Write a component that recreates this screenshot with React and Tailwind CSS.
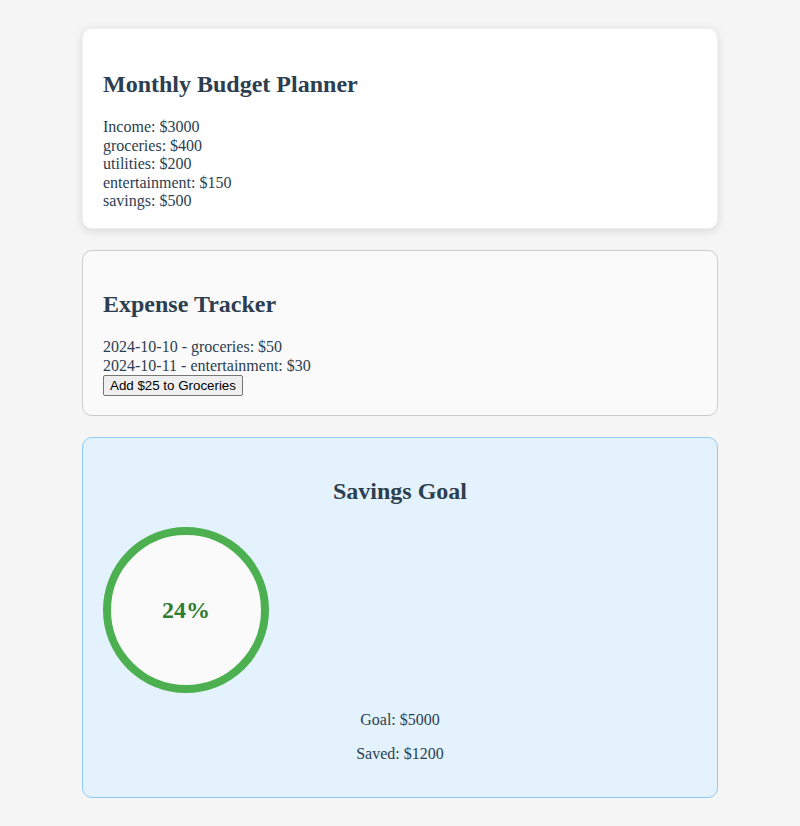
import React from 'react';

const budget = [
    ['Income', 3000],
    ['groceries', 400],
    ['utilities', 200],
    ['entertainment', 150],
    ['savings', 500],
];

const expenses = [
    { date: '2024-10-10', category: 'groceries', amount: 50 },
    { date: '2024-10-11', category: 'entertainment', amount: 30 },
];

const App = () => {
    const goal = 5000;
    const saved = 1200;
    const pct = Math.round((saved / goal) * 100);

    return (
        <div className="min-h-[826px] bg-[#f5f5f5] p-[8px] font-['Liberation_Serif',serif] text-[16px] text-[#2c3e50]">
            <div className="w-[636px] mx-auto pt-[20px] pb-[20px] flex flex-col gap-[21px]">
                {/* Budget */}
                <div className="bg-white border border-[#f0f0f0] rounded-[10px] px-[20px] pt-[22px] pb-[17.5px] shadow-[0_2px_10px_rgba(0,0,0,0.12)]">
                    <h2 className="text-[24px] font-bold leading-[27.6px] my-[19.92px]">Monthly Budget Planner</h2>
                    {budget.map(([name, val]) => (
                        <div key={name} className="leading-[18.4px]">{name}: ${val}</div>
                    ))}
                </div>

                {/* Expenses */}
                <div className="bg-[#fafafa] border border-[#cccccc] rounded-[10px] px-[20px] pt-[20px] pb-[19px]">
                    <h2 className="text-[24px] font-bold leading-[27.6px] my-[19.92px]">Expense Tracker</h2>
                    {expenses.map((e) => (
                        <div key={e.date} className="leading-[18.4px]">{e.date} - {e.category}: ${e.amount}</div>
                    ))}
                    <div className="flex">
                        <button className="font-['Liberation_Sans',sans-serif] text-[13.33px] leading-[15.3px] text-black px-[6px] py-[2px] bg-[#efefef] border border-[#767676] rounded-[2px]">
                            Add $25 to Groceries
                        </button>
                    </div>
                </div>

                {/* Savings */}
                <div className="bg-[#e3f2fd] border border-[#90caf9] rounded-[10px] px-[20px] pt-[20px] pb-[17px] text-center">
                    <h2 className="text-[24px] font-bold leading-[27.6px] mt-[19.92px] mb-[20.92px]">Savings Goal</h2>
                    <div className="w-[166px] h-[166px] rounded-full border-[8px] border-[#4caf50] bg-[#fafafa] flex items-center justify-center">
                        <span className="text-[24px] font-bold text-[#2e7d32]">{pct}%</span>
                    </div>
                    <p className="leading-[18.4px] mt-[18px]">Goal: ${goal}</p>
                    <p className="leading-[18.4px] my-[16px]">Saved: ${saved}</p>
                </div>
            </div>
        </div>
    );
};

export default App;
